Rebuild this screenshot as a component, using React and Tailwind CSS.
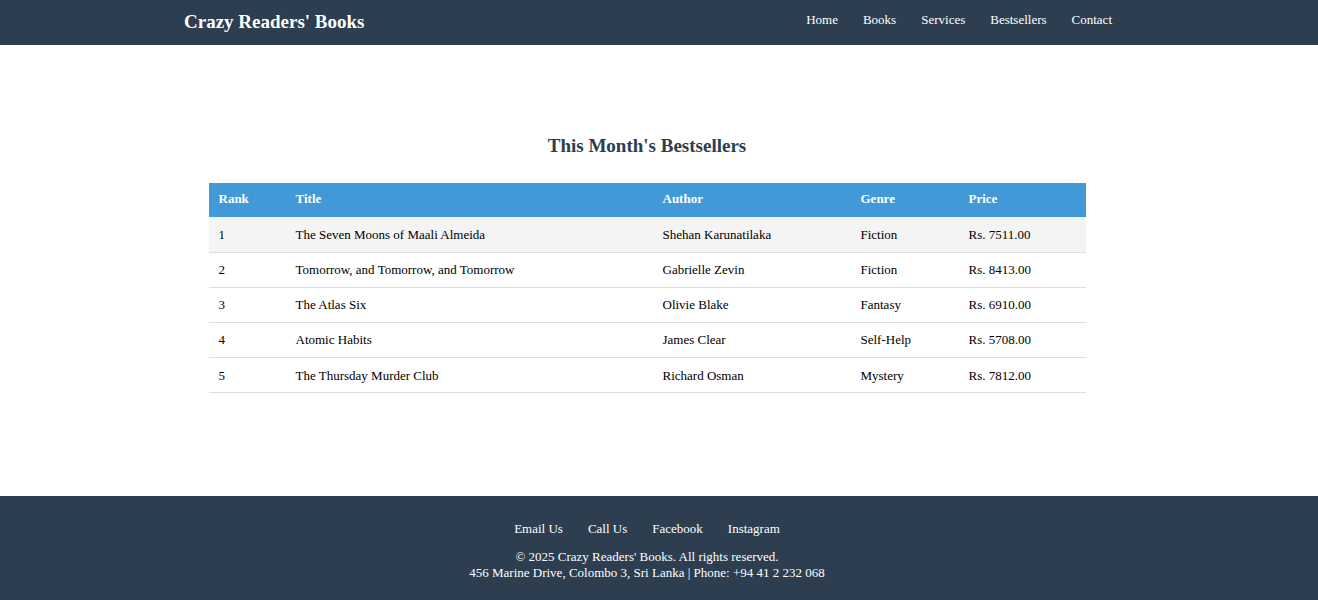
const books = [
    { rank: 1, title: 'The Seven Moons of Maali Almeida', author: 'Shehan Karunatilaka', genre: 'Fiction', price: 'Rs. 7511.00' },
    { rank: 2, title: 'Tomorrow, and Tomorrow, and Tomorrow', author: 'Gabrielle Zevin', genre: 'Fiction', price: 'Rs. 8413.00' },
    { rank: 3, title: 'The Atlas Six', author: 'Olivie Blake', genre: 'Fantasy', price: 'Rs. 6910.00' },
    { rank: 4, title: 'Atomic Habits', author: 'James Clear', genre: 'Self-Help', price: 'Rs. 5708.00' },
    { rank: 5, title: 'The Thursday Murder Club', author: 'Richard Osman', genre: 'Mystery', price: 'Rs. 7812.00' },
]

const navLinks = ['Home', 'Books', 'Services', 'Bestsellers', 'Contact']
const footerLinks = ['Email Us', 'Call Us', 'Facebook', 'Instagram']

const App = () => {
    return (
        <div className="min-h-[600px] flex flex-col bg-white text-black font-['Liberation_Serif','Times_New_Roman',serif]">
            {/* Header */}
            <header className="bg-[#2c3e50] text-white h-[45px]">
                <div className="w-[950px] mx-auto h-full flex items-center justify-between">
                    <h1 className="text-[19px] font-bold leading-none pb-[3px]">Crazy Readers' Books</h1>
                    <nav className="flex gap-[25px] text-[13px] pr-[22px] pb-[5px]">
                        {navLinks.map((link) => (
                            <a key={link} href="#" className="text-white">
                                {link}
                            </a>
                        ))}
                    </nav>
                </div>
            </header>

            {/* Bestsellers */}
            <main className="flex-1 pt-[89px]">
                <div className="w-[877px] mx-auto translate-x-[-12px]">
                    <h2 className="text-[19px] font-bold text-[#2c3e50] text-center leading-[24px]">
                        This Month's Bestsellers
                    </h2>
                    <table className="w-full mt-[25px] border-collapse text-[13px] text-left">
                        <thead>
                            <tr className="bg-[#4299d8] text-white h-[34px]">
                                <th className="pl-[10px] pb-[2px] w-[77px] font-bold">Rank</th>
                                <th className="pl-[10px] pb-[2px] w-[367px] font-bold">Title</th>
                                <th className="pl-[10px] pb-[2px] w-[198px] font-bold">Author</th>
                                <th className="pl-[10px] pb-[2px] w-[108px] font-bold">Genre</th>
                                <th className="pl-[10px] pb-[2px] font-bold">Price</th>
                            </tr>
                        </thead>
                        <tbody>
                            {books.map((book, idx) => (
                                <tr
                                    key={book.rank}
                                    className={`h-[35.2px] border-b border-[#dddddd] ${idx === 0 ? 'bg-[#f4f4f4]' : 'bg-white'}`}
                                >
                                    <td className="pl-[10px]">{book.rank}</td>
                                    <td className="pl-[10px]">{book.title}</td>
                                    <td className="pl-[10px]">{book.author}</td>
                                    <td className="pl-[10px]">{book.genre}</td>
                                    <td className="pl-[10px]">{book.price}</td>
                                </tr>
                            ))}
                        </tbody>
                    </table>
                </div>
            </main>

            {/* Footer */}
            <footer className="bg-[#2c3e50] text-white h-[104px] text-[13px] text-center pt-[23px]">
                <div className="translate-x-[-12px]">
                    <div className="flex justify-center gap-[25px]">
                        {footerLinks.map((link) => (
                            <a key={link} href="#" className="text-white">
                                {link}
                            </a>
                        ))}
                    </div>
                    <p className="mt-[10px] leading-[16px]">&copy; 2025 Crazy Readers' Books. All rights reserved.</p>
                    <p className="leading-[16px]">456 Marine Drive, Colombo 3, Sri Lanka | Phone: +94 41 2 232 068</p>
                </div>
            </footer>
        </div>
    )
}

export default App
